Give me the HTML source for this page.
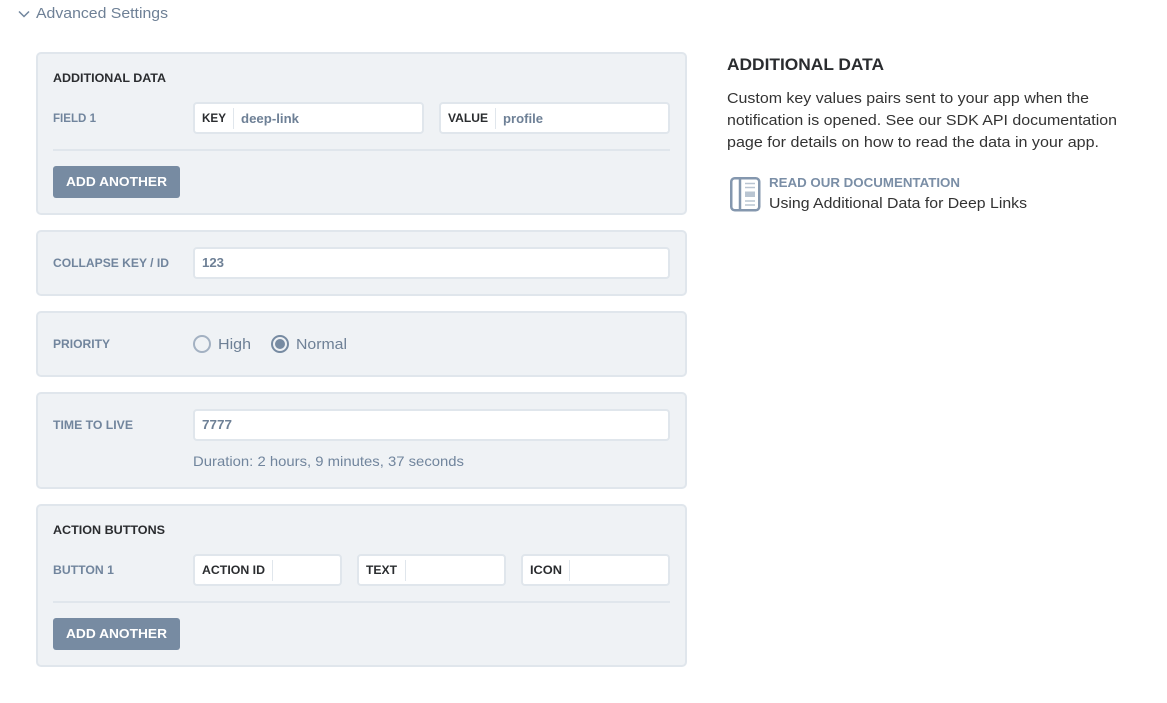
<!DOCTYPE html>
<html lang="en">
<head>
<meta charset="utf-8">
<title>Advanced Settings</title>
<style>
html,body{margin:0;padding:0;background:#fff;width:1167px;height:703px;overflow:hidden}
svg{display:block;position:absolute;left:0;top:0}
text{font-family:"Liberation Sans",Arial,sans-serif}
.p{fill:#eff2f5;stroke:#e0e6ec;stroke-width:2}
.i{fill:#fff;stroke:#e0e6ec;stroke-width:2}
.d{stroke:#e0e6ec;stroke-width:2}
.v{stroke:#e0e6ec;stroke-width:1}
.l{font-size:12px;font-weight:bold;fill:#71859d}
.h{font-size:12px;font-weight:bold;fill:#2a2c2f}
.k{font-size:12px;font-weight:bold;fill:#2a2c2f}
.t{font-size:13px;font-weight:bold;fill:#6e8096}
.b{font-size:13px;font-weight:bold;fill:#fff}
.r{font-size:15px;fill:#6e8096}
.q{font-size:15px;fill:#333}
</style>
</head>
<body>
<svg width="1167" height="703" viewBox="0 0 1167 703" xmlns="http://www.w3.org/2000/svg">
<path d="M19 11.500l5 5 5-5" fill="none" stroke="#71859d" stroke-width="1.500"/>
<text x="36" y="18" class="r" textLength="132" lengthAdjust="spacingAndGlyphs">Advanced Settings</text>

<rect class="p" x="37" y="53" width="649" height="161" rx="4"/>
<text x="53" y="82" class="h" textLength="113" lengthAdjust="spacingAndGlyphs">ADDITIONAL DATA</text>
<text x="53" y="122" class="l" textLength="43" lengthAdjust="spacingAndGlyphs">FIELD 1</text>
<rect class="i" x="194" y="103" width="229" height="30" rx="3"/>
<text x="202" y="122" class="k" textLength="24" lengthAdjust="spacingAndGlyphs">KEY</text>
<line class="v" x1="233.500" y1="108" x2="233.500" y2="129"/>
<text x="241" y="123" class="t" textLength="58" lengthAdjust="spacingAndGlyphs">deep-link</text>
<rect class="i" x="440" y="103" width="229" height="30" rx="3"/>
<text x="448" y="122" class="k" textLength="40" lengthAdjust="spacingAndGlyphs">VALUE</text>
<line class="v" x1="495.500" y1="108" x2="495.500" y2="129"/>
<text x="503" y="123" class="t" textLength="40" lengthAdjust="spacingAndGlyphs">profile</text>
<line class="d" x1="53" y1="150" x2="670" y2="150"/>
<rect x="53" y="166" width="127" height="32" rx="3" fill="#778ba2"/>
<text x="66" y="186" class="b" textLength="101" lengthAdjust="spacingAndGlyphs">ADD ANOTHER</text>

<rect class="p" x="37" y="231" width="649" height="64" rx="4"/>
<text x="53" y="267" class="l" textLength="116" lengthAdjust="spacingAndGlyphs">COLLAPSE KEY / ID</text>
<rect class="i" x="194" y="248" width="475" height="30" rx="3"/>
<text x="202" y="267" class="t" textLength="22" lengthAdjust="spacingAndGlyphs">123</text>

<rect class="p" x="37" y="312" width="649" height="64" rx="4"/>
<text x="53" y="348" class="l" textLength="57" lengthAdjust="spacingAndGlyphs">PRIORITY</text>
<circle cx="202" cy="344" r="8" fill="#eff2f5" stroke="#a3b1c2" stroke-width="2"/>
<text x="218" y="349" class="r" textLength="33" lengthAdjust="spacingAndGlyphs">High</text>
<circle cx="280" cy="344" r="8" fill="#eff2f5" stroke="#778ba2" stroke-width="2"/>
<circle cx="280" cy="344" r="5" fill="#778ba2"/>
<text x="296" y="349" class="r" textLength="51" lengthAdjust="spacingAndGlyphs">Normal</text>

<rect class="p" x="37" y="393" width="649" height="95" rx="4"/>
<text x="53" y="429" class="l" textLength="80" lengthAdjust="spacingAndGlyphs">TIME TO LIVE</text>
<rect class="i" x="194" y="410" width="475" height="30" rx="3"/>
<text x="202" y="429" class="t" textLength="30" lengthAdjust="spacingAndGlyphs">7777</text>
<text x="193" y="466" font-size="14" fill="#71859d" textLength="271" lengthAdjust="spacingAndGlyphs">Duration: 2 hours, 9 minutes, 37 seconds</text>

<rect class="p" x="37" y="505" width="649" height="161" rx="4"/>
<text x="53" y="534" class="h" textLength="112" lengthAdjust="spacingAndGlyphs">ACTION BUTTONS</text>
<text x="53" y="574" class="l" textLength="61" lengthAdjust="spacingAndGlyphs">BUTTON 1</text>
<rect class="i" x="194" y="555" width="147" height="30" rx="3"/>
<text x="202" y="574" class="k" textLength="63" lengthAdjust="spacingAndGlyphs">ACTION ID</text>
<line class="v" x1="272.500" y1="560" x2="272.500" y2="581"/>
<rect class="i" x="358" y="555" width="147" height="30" rx="3"/>
<text x="366" y="574" class="k" textLength="31" lengthAdjust="spacingAndGlyphs">TEXT</text>
<line class="v" x1="405.500" y1="560" x2="405.500" y2="581"/>
<rect class="i" x="522" y="555" width="147" height="30" rx="3"/>
<text x="530" y="574" class="k" textLength="32" lengthAdjust="spacingAndGlyphs">ICON</text>
<line class="v" x1="569.500" y1="560" x2="569.500" y2="581"/>
<line class="d" x1="53" y1="602" x2="670" y2="602"/>
<rect x="53" y="618" width="127" height="32" rx="3" fill="#778ba2"/>
<text x="66" y="638" class="b" textLength="101" lengthAdjust="spacingAndGlyphs">ADD ANOTHER</text>

<text x="727" y="70" font-size="17" font-weight="bold" fill="#2a2c2f" textLength="157" lengthAdjust="spacingAndGlyphs">ADDITIONAL DATA</text>
<text x="727" y="103" class="q" textLength="362" lengthAdjust="spacingAndGlyphs">Custom key values pairs sent to your app when the</text>
<text x="727" y="125" class="q" textLength="390" lengthAdjust="spacingAndGlyphs">notification is opened. See our SDK API documentation</text>
<text x="727" y="147" class="q" textLength="372" lengthAdjust="spacingAndGlyphs">page for details on how to read the data in your app.</text>

<rect x="731.250" y="178.250" width="28" height="32" rx="3.500" fill="#fff" stroke="#8497ae" stroke-width="2.500"/>
<line x1="740" y1="178" x2="740" y2="210" stroke="#8497ae" stroke-width="2.500"/>
<path d="M745 183.500h10M745 187.500h10M745 201h10M745 205h10" stroke="#b9c5d2" stroke-width="1.500" fill="none"/>
<rect x="745" y="191.500" width="10" height="5.500" fill="#b9c5d2"/>
<text x="769" y="187" font-size="13" font-weight="bold" fill="#7a8ea6" textLength="191" lengthAdjust="spacingAndGlyphs">READ OUR DOCUMENTATION</text>
<text x="769" y="208" class="q" textLength="258" lengthAdjust="spacingAndGlyphs">Using Additional Data for Deep Links</text>
</svg>
</body>
</html>
